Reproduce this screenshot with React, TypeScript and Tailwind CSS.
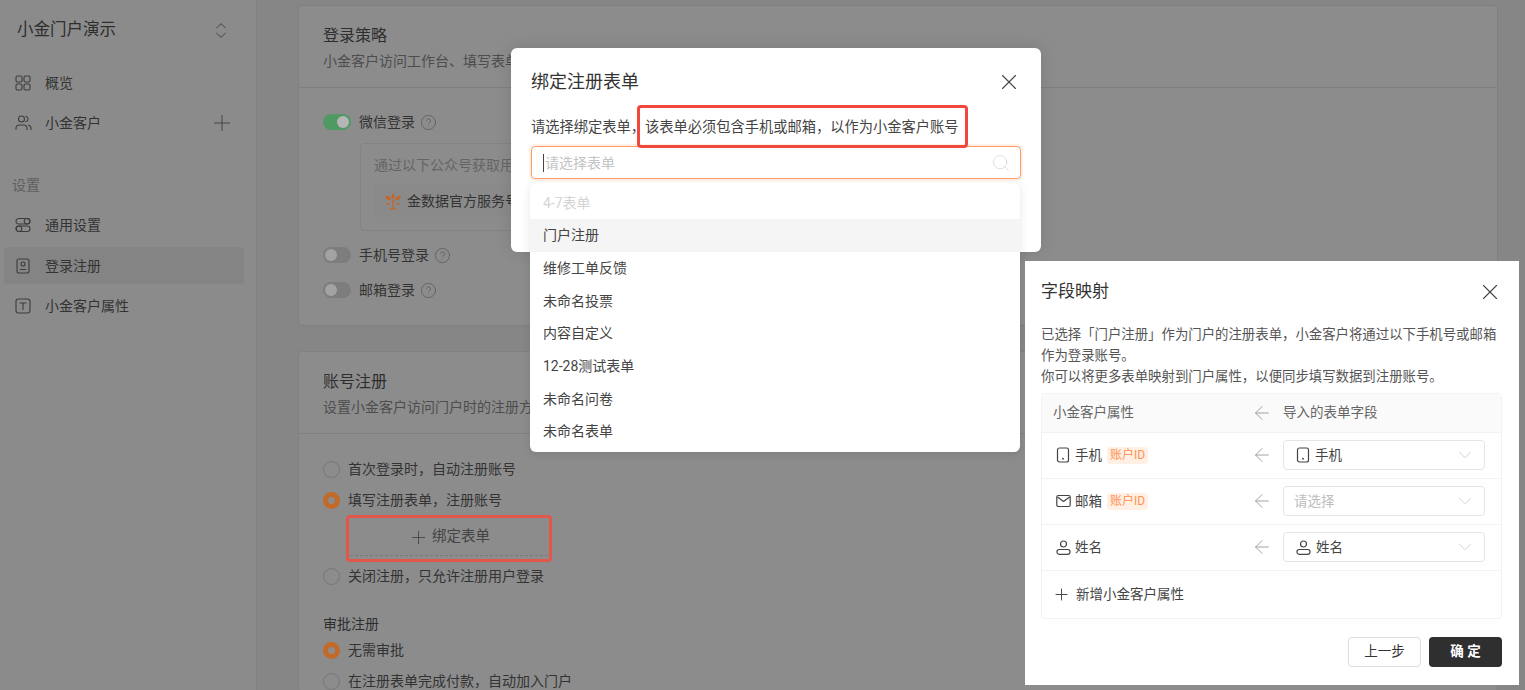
import React from 'react';
import { ArrowLeft, ChevronDown, CircleHelp, Plus, Search, X } from 'lucide-react';

const IconUpDown = () => (
  <svg width="10" height="15" viewBox="0 0 10 15" fill="none" stroke="currentColor" strokeWidth="1" strokeLinecap="round" strokeLinejoin="round">
    <path d="M.7 4.700L5 .7l4.300 4M.7 10.300L5 14.300l4.300-4" />
  </svg>
);

const IconGrid = () => (
  <svg width="16" height="16" viewBox="0 0 16 16" fill="none" stroke="currentColor" strokeWidth="1.1">
    <rect x="1" y="1" width="6" height="6" rx="1.4" />
    <rect x="9" y="1" width="6" height="6" rx="1.4" />
    <rect x="1" y="9" width="6" height="6" rx="1.4" />
    <rect x="9" y="9" width="6" height="6" rx="1.4" />
  </svg>
);

const IconUsers = () => (
  <svg width="17" height="16" viewBox="0 0 17 16" fill="none" stroke="currentColor" strokeWidth="1.1" strokeLinecap="round">
    <circle cx="6.5" cy="4" r="3" />
    <path d="M1 14.500v-1.200c0-2 1.600-3.300 3.600-3.300h3.800c2 0 3.600 1.300 3.600 3.300v1.200" />
    <path d="M10.800 1.200c1.300.3 2.200 1.400 2.200 2.800s-.9 2.500-2.200 2.800" />
    <path d="M13.600 10.200c1.400.4 2.400 1.600 2.400 3.100v1.200" />
  </svg>
);

const IconToggles = () => (
  <svg width="16" height="16" viewBox="0 0 16 16" fill="none" stroke="currentColor" strokeWidth="1.1">
    <rect x="1" y="1.500" width="14" height="5.500" rx="2.750" />
    <circle cx="12" cy="4.250" r="2.750" />
    <rect x="1" y="9" width="14" height="5.500" rx="2.750" />
    <circle cx="4" cy="11.750" r="2.750" />
  </svg>
);

const IconLogin = () => (
  <svg width="16" height="16" viewBox="0 0 16 16" fill="none" stroke="currentColor" strokeWidth="1.1" strokeLinecap="round">
    <rect x="2" y="1" width="12" height="14" rx="2" />
    <circle cx="8" cy="6" r="2" />
    <path d="M5.500 11.500h5" />
  </svg>
);

const IconText = () => (
  <svg width="16" height="16" viewBox="0 0 16 16" fill="none" stroke="currentColor" strokeWidth="1.1" strokeLinecap="round">
    <rect x="1" y="1" width="14" height="14" rx="2.500" />
    <path d="M5 5h6M8 5v6.500" />
  </svg>
);

const IconPhone = () => (
  <svg width="14" height="16" viewBox="0 0 14 16" fill="none" stroke="currentColor" strokeWidth="1.2" strokeLinecap="round">
    <rect x="1.500" y="1" width="11" height="14" rx="2" />
    <path d="M7 11.600v.2" strokeWidth="1.800" />
  </svg>
);

const IconMail = () => (
  <svg width="15" height="14" viewBox="0 0 15 14" fill="none" stroke="currentColor" strokeWidth="1.2" strokeLinejoin="round">
    <rect x="0.800" y="1.500" width="13.400" height="11" rx="1.500" />
    <path d="M1.500 3l6 4.500 6-4.500" />
  </svg>
);

const IconPerson = () => (
  <svg width="15" height="15" viewBox="0 0 15 15" fill="none" stroke="currentColor" strokeWidth="1.2">
    <circle cx="7.500" cy="4" r="3" />
    <rect x="1" y="9.500" width="13" height="4.800" rx="2.200" />
  </svg>
);

// wechat account logo, small orange tree
const IconTree = () => (
  <svg width="16" height="17" viewBox="0 0 16 17" fill="#c4662a">
    <path d="M7.400 15.500h1.200V9.600l1.600-1.300-.7-.6-.9.800V6.400H7.400v2L6.500 7.700l-.7.6 1.600 1.300z" />
    <path d="M8 .5c1.400 1.100 1.900 2.500 1.500 4.100-.2.600-.7 1-1.500 1.300-.8-.3-1.300-.7-1.500-1.300C6.100 3 6.600 1.600 8 .5z" />
    <path d="M.3 3.200c2.100-.5 3.800.1 5 1.700.3.600.3 1.300 0 2-1.900.3-3.300-.2-4.200-1.400C.6 4.900.4 4.100.3 3.200zM15.700 3.200c-2.100-.5-3.800.1-5 1.700-.3.600-.3 1.300 0 2 1.900.3 3.300-.2 4.200-1.400.5-.6.700-1.400.8-2.300z" />
    <path d="M1 10.200c1.500-.6 2.900-.2 4 1.200-1.400.8-2.800.4-4-1.200zM15 10.200c-1.500-.6-2.900-.2-4 1.200 1.400.8 2.800.4 4-1.200zM4.500 15.200h7v1.200h-7z" />
  </svg>
);

const NavRow = ({ icon, label, active, extra }: { icon: React.ReactNode; label: string; active?: boolean; extra?: React.ReactNode }) => (
  <div className={`mx-1 flex h-[37px] w-[240px] items-center rounded pl-[11px] pr-[9px] text-sm text-[#333333] ${active ? 'bg-[#848484]' : ''}`}>
    <span className="flex w-[30px] shrink-0 text-[#3d3d3d]">{icon}</span>
    <span className="flex-1">{label}</span>
    {extra}
  </div>
);

const Help = () => <CircleHelp size={17} strokeWidth={1.1} className="text-[#5a5a5a]" />;

const SwitchRow = ({ label, on }: { label: string; on?: boolean }) => (
  <div className="flex h-5 items-center text-sm text-[#333333]">
    <span className={`mr-2 flex h-4 w-7 items-center rounded-full px-[2px] ${on ? 'justify-end bg-[#4f9a63]' : 'bg-[#7d7d7d]'}`}>
      <span className={`h-3 w-3 rounded-full ${on ? 'bg-[#b5b5b5]' : 'bg-[#a3a3a3]'}`} />
    </span>
    <span>{label}</span>
    <span className="ml-[5px]"><Help /></span>
  </div>
);

const Radio = ({ label, checked, className }: { label: string; checked?: boolean; className?: string }) => (
  <div className={`flex h-5 items-center text-sm text-[#333333] ${className ?? ''}`}>
    <span className={`mr-2 h-[17px] w-[17px] rounded-full ${checked ? 'border-[5px] border-[#c46a28]' : 'border border-[#767676]'}`} />
    <span>{label}</span>
  </div>
);

const CardHead = ({ title, desc }: { title: string; desc: string }) => (
  <div className="h-[82px] border-b border-[#7f7f7f] px-6 pt-[19px]">
    <div className="text-base leading-[22px] text-[#2e2e2e]">{title}</div>
    <div className="mt-[4px] text-sm leading-5 text-[#4d4d4d]">{desc}</div>
  </div>
);

const Tag = () => (
  <span className="ml-[5px] flex h-[17px] w-[41px] items-center justify-center rounded-sm bg-[#fff0e3] text-xs text-[#ff9155]">账户ID</span>
);

const Select = ({ icon, label }: { icon?: React.ReactNode; label: string }) => (
  <div className={`flex h-[30px] w-[202px] items-center rounded border border-[#e4e4e4] pr-[8px] text-[13.5px] ${icon ? 'pl-[12px] text-[#444444]' : 'pl-[10px] text-[#bdbdbd]'}`}>
    {icon && <span className="mr-[5px] flex text-[#444444]">{icon}</span>}
    <span className="flex-1">{label}</span>
    <ChevronDown size={22} strokeWidth={0.9} className="text-[#c8c8c8]" />
  </div>
);

const MapRow = ({ icon, label, tag, select }: { icon: React.ReactNode; label: string; tag?: boolean; select: React.ReactNode }) => (
  <div className="flex h-[46px] items-center border-b border-[#f2f2f2] pl-[14px] pr-[16px] text-[13.5px] text-[#444444]">
    <span className="flex w-[19px] text-[#444444]">{icon}</span>
    <span>{label}</span>
    {tag && <Tag />}
    <span className="ml-auto flex w-[234px] items-center">
      <ArrowLeft size={22} strokeWidth={1} className="mr-[10px] text-[#999999]" />
      {select}
    </span>
  </div>
);

const formOptions = ['门户注册', '维修工单反馈', '未命名投票', '内容自定义', '12-28测试表单', '未命名问卷', '未命名表单'];

export default function App() {
  return (
    <div className="relative flex h-[690px] w-[1525px] overflow-hidden bg-[#868686] [font-family:Roboto,'Noto_Sans_CJK_SC',sans-serif]">
      {/* sidebar */}
      <aside className="h-full w-[257px] shrink-0 border-r border-[#808080] bg-[#8b8b8b]">
        <div className="flex h-[60px] items-center pl-[17px] pr-[30px] text-[16.5px] text-[#2e2e2e]">
          <span className="flex-1">小金门户演示</span>
          <span className="flex text-[#444444]"><IconUpDown /></span>
        </div>
        <div className="mt-[4px] flex flex-col gap-[3.500px]">
          <NavRow icon={<IconGrid />} label="概览" />
          <NavRow icon={<IconUsers />} label="小金客户" extra={<Plus size={26} strokeWidth={0.9} className="text-[#444444]" />} />
        </div>
        <div className="mt-[33px] pl-3 text-sm leading-5 text-[#5f5f5f]">设置</div>
        <div className="mt-[12px] flex flex-col gap-[3.500px]">
          <NavRow icon={<IconToggles />} label="通用设置" />
          <NavRow icon={<IconLogin />} label="登录注册" active />
          <NavRow icon={<IconText />} label="小金客户属性" />
        </div>
      </aside>

      {/* main column */}
      <main className="flex flex-col gap-[25px] pl-[41px] pt-[5px]">
        <section className="w-[1200px] shrink-0 rounded border border-[#808080] bg-[#8c8c8c]">
          <CardHead title="登录策略" desc="小金客户访问工作台、填写表单时的登录方式" />
          <div className="px-6 pb-[25px] pt-[24px]">
            <SwitchRow label="微信登录" on />
            <div className="ml-[37px] mt-[11px] h-[88px] w-[600px] rounded border border-[#838383] px-[13px] pt-[11px]">
              <div className="text-sm leading-5 text-[#656565]">通过以下公众号获取用户信息</div>
              <div className="mt-[10px] flex h-[32px] items-center rounded bg-[#8a8a8a] pl-[11px] text-sm text-[#333333]">
                <IconTree />
                <span className="ml-[6px]">金数据官方服务号</span>
              </div>
            </div>
            <div className="mt-[14px]"><SwitchRow label="手机号登录" /></div>
            <div className="mt-[15px]"><SwitchRow label="邮箱登录" /></div>
          </div>
        </section>

        <section className="w-[1200px] shrink-0 rounded border border-[#808080] bg-[#8c8c8c]">
          <CardHead title="账号注册" desc="设置小金客户访问门户时的注册方式" />
          <div className="px-6 pt-[25px]">
            <Radio label="首次登录时，自动注册账号" />
            <Radio label="填写注册表单，注册账号" checked className="mt-[11px]" />
            <div className="relative ml-[27px] mt-[9px] flex h-[37px] w-[198px] items-center justify-center border-b border-dashed border-[#7c7c7c] text-[14.500px] text-[#444444]">
              <Plus size={21} strokeWidth={1} className="mr-[3px]" />
              绑定表单
              <span className="absolute -inset-x-[4px] -bottom-[7px] -top-[4px] rounded-sm border-[3px] border-[#e2574a]" />
            </div>
            <Radio label="关闭注册，只允许注册用户登录" className="mt-[10px]" />
            <div className="mt-[28px] text-sm leading-5 text-[#2e2e2e]">审批注册</div>
            <Radio label="无需审批" checked className="mt-[6px]" />
            <Radio label="在注册表单完成付款，自动加入门户" className="mt-[11px]" />
          </div>
        </section>
      </main>

      {/* bind form modal */}
      <div className="absolute left-[511px] top-[48px] h-[204px] w-[530px] rounded-md bg-white px-5 pt-[22px] shadow-[0_0_16px_rgba(0,0,0,0.12)]">
        <div className="flex h-6 items-center justify-between text-lg text-[#333333]">
          <span>绑定注册表单</span>
          <X size={26} strokeWidth={1} className="mr-[-1px] text-[#444444]" />
        </div>
        <div className="mt-[24px] flex h-5 items-center text-[14.250px] text-[#444444]">请选择绑定表单，该表单必须包含手机或邮箱，以作为小金客户账号</div>
        <div className="mt-[8px] flex h-[33px] items-center rounded border border-[#ff9c66] pl-[11px] pr-[9px] text-sm text-[#c4c4c4] shadow-[0_0_0_2px_#fff1e8]">
          <span className="mr-[1px] h-[18px] w-px bg-[#444444]" />
          <span className="flex-1">请选择表单</span>
          <Search size={20} strokeWidth={0.9} className="text-[#d4d4d4]" />
        </div>
        <span className="absolute left-[126px] top-[57px] h-[43px] w-[331px] rounded-sm border-[3px] border-[#f0483c]" />
      </div>

      {/* dropdown options */}
      <div className="absolute left-[530px] top-[183px] w-[490px] rounded-md bg-white py-1 text-sm text-[#444444] shadow-[0_2px_10px_rgba(0,0,0,0.1)]">
        <div className="flex h-[32px] items-center pl-[13px] text-[#d4d4d4]">4-7表单</div>
        {formOptions.map((name, i) => (
          <div key={name} className={`flex h-[32.700px] items-center pl-[13px] ${i === 0 ? 'bg-[#f5f5f5]' : ''}`}>
            {name}
          </div>
        ))}
      </div>

      {/* field mapping panel */}
      <div className="absolute left-[1025px] top-[261px] h-[424px] w-[494px] bg-white px-4 pt-[20px]">
        <div className="flex h-[22px] items-center justify-between text-[17px] text-[#333333]">
          <span>字段映射</span>
          <X size={26} strokeWidth={1} className="text-[#444444]" />
        </div>
        <div className="mt-[21px] text-[13.400px] leading-[21px] text-[#555555]">
          <div>已选择「门户注册」作为门户的注册表单，小金客户将通过以下手机号或邮箱</div>
          <div>作为登录账号。</div>
          <div>你可以将更多表单映射到门户属性，以便同步填写数据到注册账号。</div>
        </div>
        <div className="mt-[5.500px] w-[461px] rounded border border-[#f2f2f2]">
          <div className="flex h-[39px] items-center border-b border-[#f2f2f2] bg-[#fafafa] pl-[11px] pr-[16px] text-[13.500px] text-[#666666]">
            <span className="flex-1">小金客户属性</span>
            <span className="flex w-[234px] items-center">
              <ArrowLeft size={22} strokeWidth={1} className="mr-[10px] text-[#999999]" />
              导入的表单字段
            </span>
          </div>
          <MapRow icon={<IconPhone />} label="手机" tag select={<Select icon={<IconPhone />} label="手机" />} />
          <MapRow icon={<IconMail />} label="邮箱" tag select={<Select label="请选择" />} />
          <MapRow icon={<IconPerson />} label="姓名" select={<Select icon={<IconPerson />} label="姓名" />} />
          <div className="flex h-[47px] items-center pl-[10px] text-[13.500px] text-[#444444]">
            <Plus size={19} strokeWidth={1.200} className="mr-[5px]" />
            新增小金客户属性
          </div>
        </div>
        <div className="mt-[18px] flex w-[461px] justify-end gap-2">
          <div className="flex h-[30px] w-[73px] items-center justify-center rounded border border-[#dddddd] text-[13.500px] text-[#333333]">上一步</div>
          <div className="flex h-[30px] w-[73px] items-center justify-center rounded bg-[#2f2f2f] text-[13.500px] font-bold text-white">确 定</div>
        </div>
      </div>
    </div>
  );
}
